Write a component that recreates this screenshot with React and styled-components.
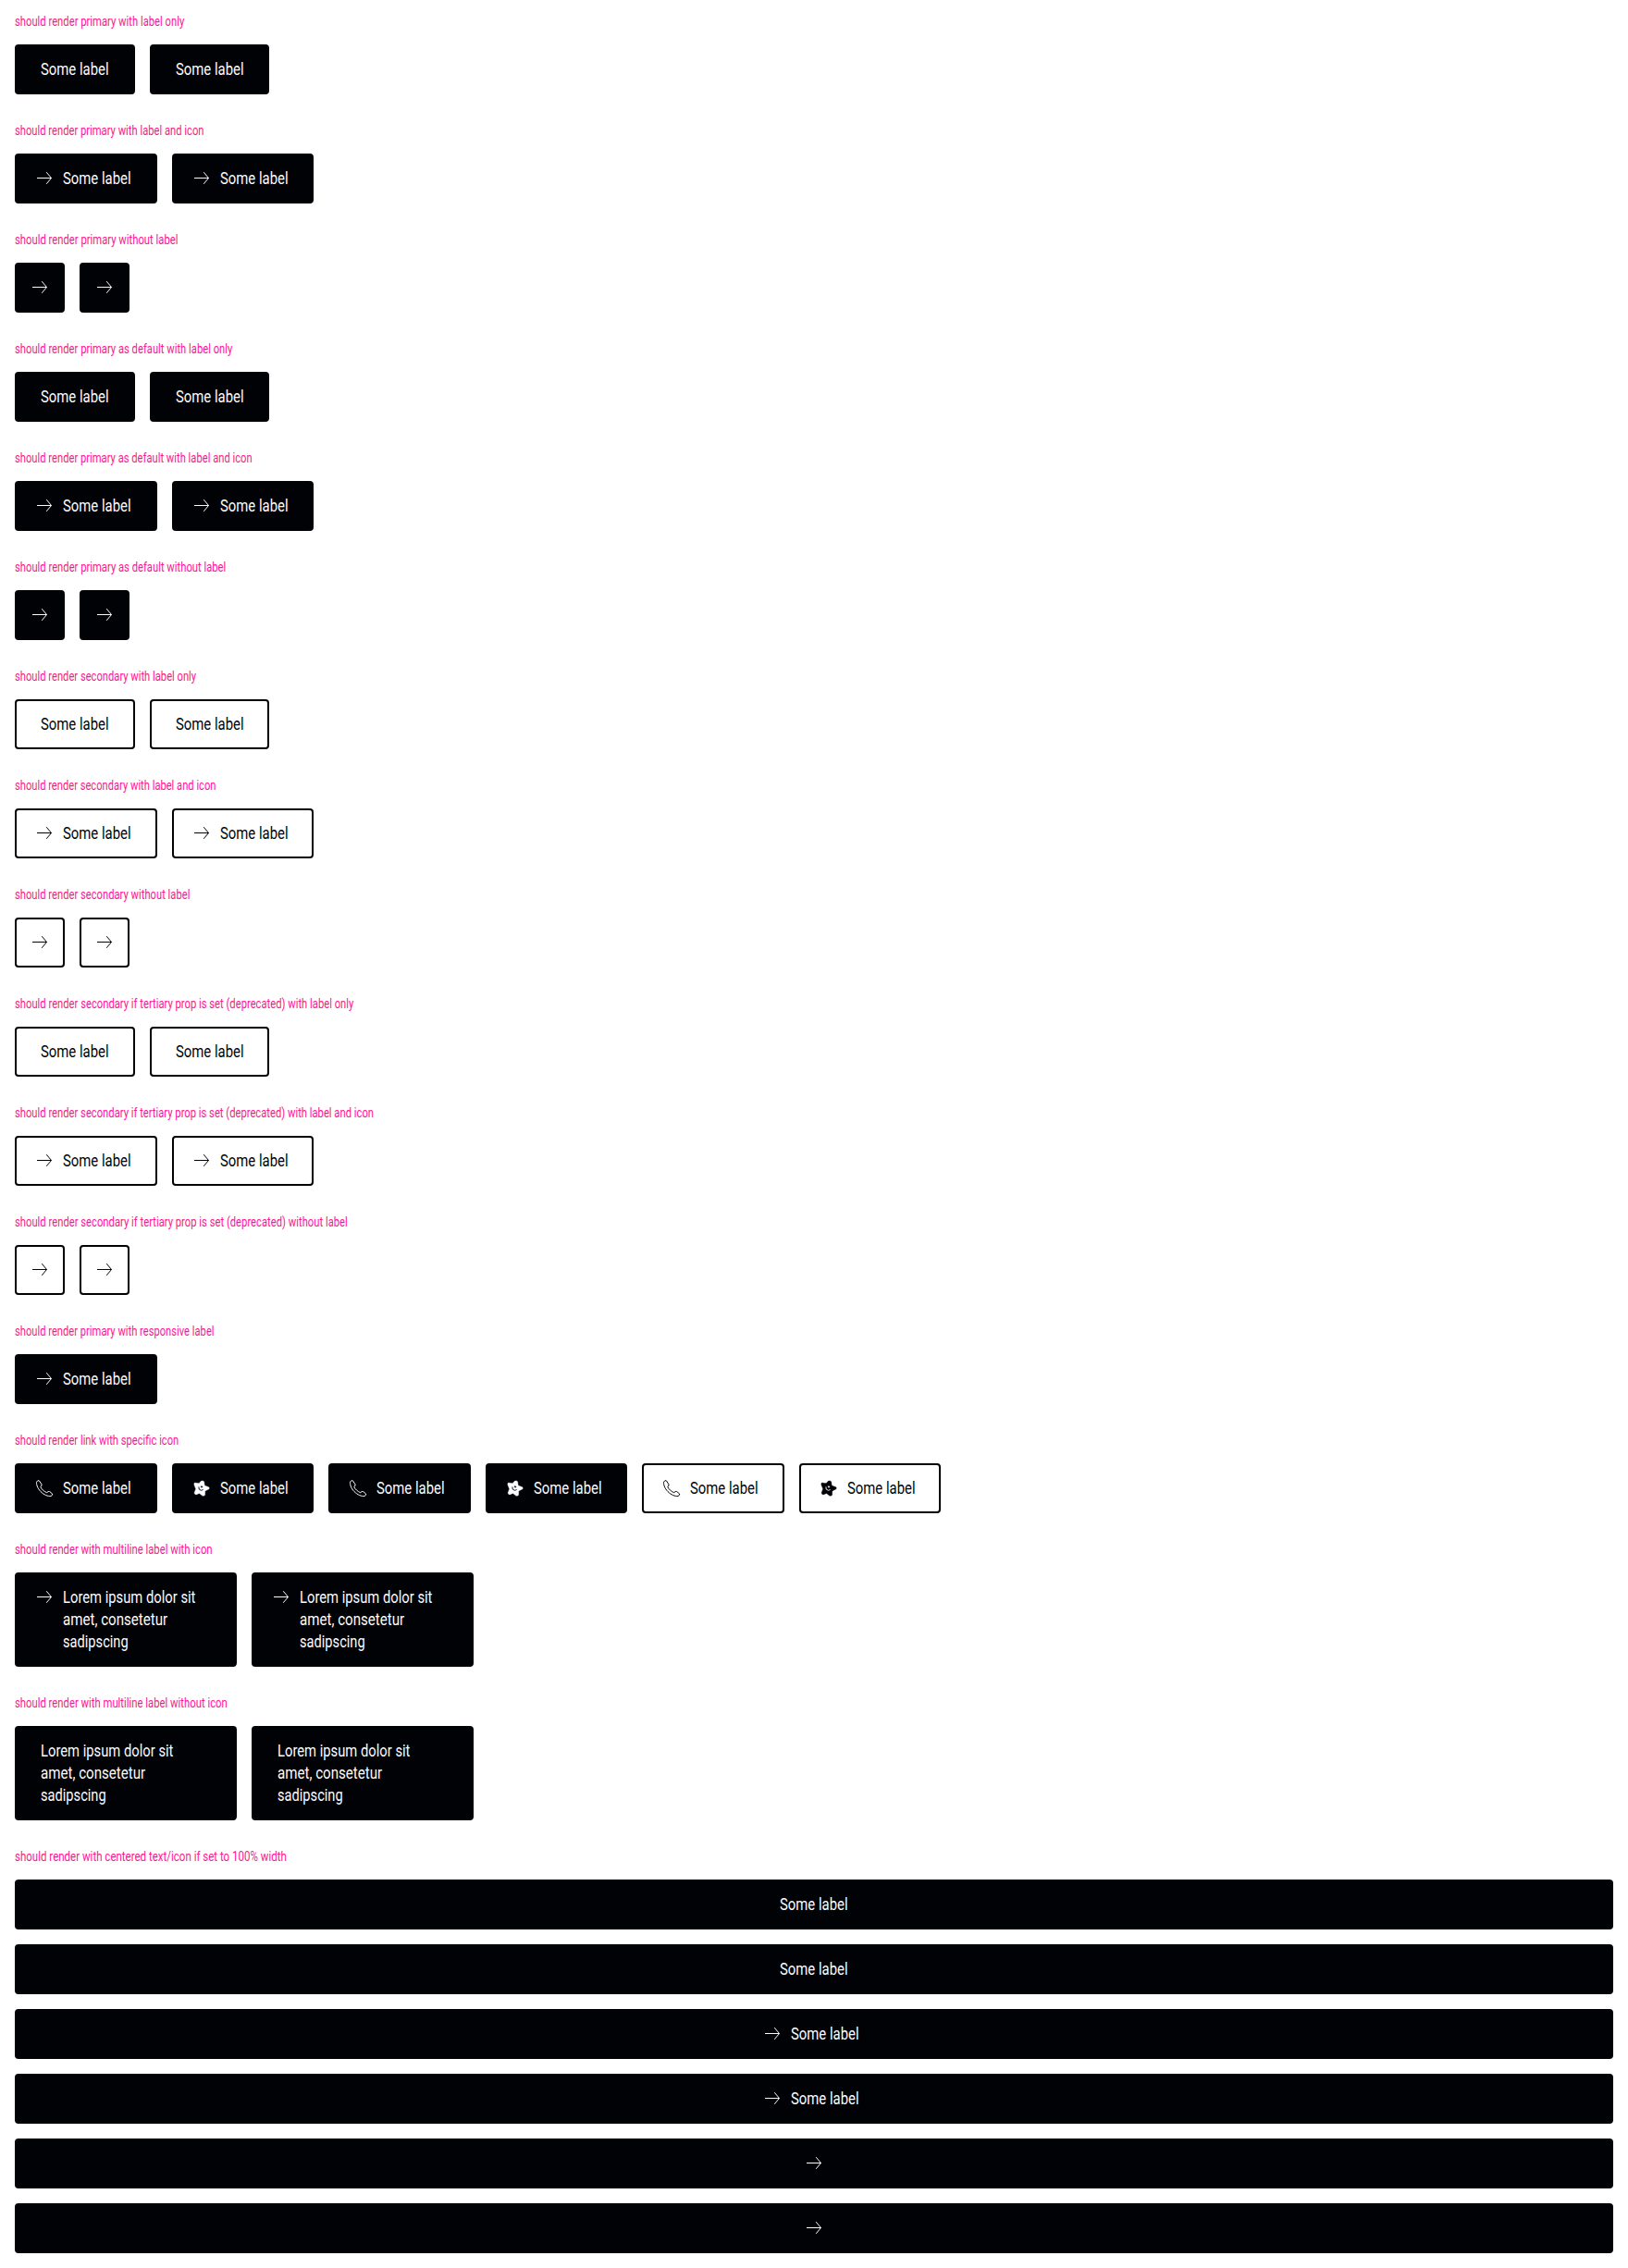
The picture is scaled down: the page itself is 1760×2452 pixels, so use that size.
import React, { useLayoutEffect, useRef, useState } from 'react';
import styled, { createGlobalStyle } from 'styled-components';

const INK = '#010205';
const PAPER = '#ffffff';

const GlobalStyle = createGlobalStyle`
  html, body { margin: 0; padding: 0; background: ${PAPER}; }
  *, *::before, *::after { box-sizing: border-box; }
`;

const Page = styled.main`
  font-family: Roboto, "Liberation Sans", sans-serif;
  font-weight: 400;
`;

const Section = styled.section`
  padding: 15px 16px 16px;
`;

const Sections = styled.div`
  display: flex;
  flex-direction: column;
`;

const Heading = styled.h2`
  margin: 0 0 17px;
  height: 16px;
  font-size: 14.2px;
  font-weight: 400;
  line-height: 16px;
  color: #ff1493;
`;

const Row = styled.div`
  display: flex;
  flex-direction: ${(p) => (p.$stacked ? 'column' : 'row')};
  align-items: ${(p) => (p.$stacked ? 'stretch' : 'flex-start')};
  gap: 16px;
`;

const Button = styled.a`
  display: flex;
  justify-content: center;
  width: ${(p) => (p.$wide ? '240px' : 'auto')};
  padding: 13px ${(p) => (p.$labelled ? 26 : 13)}px 13px ${(p) => (p.$labelled ? (p.$icon ? 18 : 26) : 13)}px;
  border: 2px solid ${INK};
  border-radius: 4px;
  background: ${(p) => (p.$variant === 'secondary' ? PAPER : INK)};
  color: ${(p) => (p.$variant === 'secondary' ? INK : '#fbfcff')};
  text-decoration: none;
  ${(p) => p.$wide && 'justify-content: flex-start;'}
`;

const Icon = styled.svg`
  display: block;
  flex: none;
  width: 24px;
  height: 24px;
  margin-right: ${(p) => (p.$spaced ? 8 : 0)}px;
`;

const Label = styled.span`
  display: block;
  font-size: 18px;
  line-height: 24px;
`;

const Line = styled.span`
  display: block;
  white-space: nowrap;
`;

const Condensed = styled.span`
  display: inline-block;
  transform-origin: 0 50%;
`;

/* Condenses a line of text horizontally to the given advance width. */
function FitLine({ width, children }) {
  const ref = useRef(null);
  const [scale, setScale] = useState(1);
  useLayoutEffect(() => {
    setScale(width / ref.current.offsetWidth);
  }, [width, children]);
  return (
    <Line style={{ width }}>
      <Condensed ref={ref} style={{ transform: `scaleX(${scale})` }}>{children}</Condensed>
    </Line>
  );
}

function Glyph({ name, spaced, hole }) {
  if (name === 'phone') {
    return (
      <Icon viewBox="0 0 24 24" $spaced={spaced} fill="none" stroke="currentColor" strokeWidth="1" strokeLinejoin="round">
        <path d="M5 3.6 3.6 5.2C3.2 8 4.5 12 8 15.6c3.5 3.5 7.800 5.300 11 4.900l1.600-1.300v-1.200l-3-2.500h-1.400l-1.500 1.200C11.500 15.500 9 13 7.800 10.600L9 9V7.800L6.400 3.900Z" />
      </Icon>
    );
  }
  if (name === 'flower') {
    return (
      <Icon viewBox="0 0 24 24" $spaced={spaced} fill="currentColor" stroke="currentColor" strokeWidth="0.4">
        <path fillRule="evenodd" d="M4.500 6.100 9 6.700 11.700 4q2.200-.3 2.900.8l.6 4.300 4.500 1.700q1 1 .3 2l-4.300 2.100-.1 4.400q-1.200 1.400-2.800.8L9.500 17.500 6 18.900q-1.800-.4-1.900-2l1.600-4.200L3.900 8.300q-.3-1.600.6-2.200ZM11.500 9.200a1.500 1.500 0 0 1 1.700 2l-1.900.4-.6-1.500Z" />
        <path d="M8.900 10.400Q8.300 13.900 11.500 14.300L13.600 13.500" fill="none" stroke={hole} strokeWidth="0.9" />
      </Icon>
    );
  }
  return (
    <Icon viewBox="0 0 24 24" $spaced={spaced} fill="none" stroke="currentColor" strokeWidth="1">
      <path d="M4 11.500H19.500M14.200 5.200 19.500 11.500 14.200 17.800" />
    </Icon>
  );
}

const SOME_LABEL = [['Some label', 73.55]];
const LOREM = [
  ['Lorem ipsum dolor sit', 143.6],
  ['amet, consetetur', 113.3],
  ['sadipscing', 70.8],
];

function LinkPure({ variant = 'primary', icon, lines, wide }) {
  return (
    <Button $variant={variant} $icon={Boolean(icon)} $labelled={Boolean(lines)} $wide={wide}>
      {icon && <Glyph name={icon} spaced={Boolean(lines)} hole={variant === 'secondary' ? PAPER : INK} />}
      {lines && (
        <Label>
          {lines.map(([text, width]) => (
            <FitLine key={text} width={width}>{text}</FitLine>
          ))}
        </Label>
      )}
    </Button>
  );
}

const label = { lines: SOME_LABEL };
const both = { lines: SOME_LABEL, icon: 'arrow' };
const bare = { icon: 'arrow' };
const twice = (item) => [item, item];
const secondary = (item) => ({ ...item, variant: 'secondary' });

const SECTIONS = [
  { title: 'should render primary with label only', width: 183, items: twice(label) },
  { title: 'should render primary with label and icon', width: 204.5, items: twice(both) },
  { title: 'should render primary without label', width: 176.3, items: twice(bare) },
  { title: 'should render primary as default with label only', width: 235, items: twice(label) },
  { title: 'should render primary as default with label and icon', width: 256.5, items: twice(both) },
  { title: 'should render primary as default without label', width: 228, items: twice(bare) },
  { title: 'should render secondary with label only', width: 196.3, items: twice(secondary(label)) },
  { title: 'should render secondary with label and icon', width: 217.8, items: twice(secondary(both)) },
  { title: 'should render secondary without label', width: 189.6, items: twice(secondary(bare)) },
  { title: 'should render secondary if tertiary prop is set (deprecated) with label only', width: 366.5, items: twice(secondary(label)) },
  { title: 'should render secondary if tertiary prop is set (deprecated) with label and icon', width: 388.3, items: twice(secondary(both)) },
  { title: 'should render secondary if tertiary prop is set (deprecated) without label', width: 360, items: twice(secondary(bare)) },
  { title: 'should render primary with responsive label', width: 215.8, items: [both] },
  {
    title: 'should render link with specific icon',
    width: 177.5,
    items: [
      { ...label, icon: 'phone' },
      { ...label, icon: 'flower' },
      { ...label, icon: 'phone' },
      { ...label, icon: 'flower' },
      secondary({ ...label, icon: 'phone' }),
      secondary({ ...label, icon: 'flower' }),
    ],
  },
  { title: 'should render with multiline label with icon', width: 213.5, items: twice({ lines: LOREM, icon: 'arrow', wide: true }) },
  { title: 'should render with multiline label without icon', width: 230, items: twice({ lines: LOREM, wide: true }) },
  {
    title: 'should render with centered text/icon if set to 100% width',
    width: 293.7,
    stacked: true,
    items: [label, label, both, both, bare, bare],
  },
];

export default function App() {
  return (
    <Page>
      <GlobalStyle />
      <Sections>
        {SECTIONS.map(({ title, width, items, stacked }) => (
          <Section key={title}>
            <Heading>
              <FitLine width={width}>{title}</FitLine>
            </Heading>
            <Row $stacked={stacked}>
              {items.map((item, i) => (
                <LinkPure key={i} {...item} />
              ))}
            </Row>
          </Section>
        ))}
      </Sections>
    </Page>
  );
}
